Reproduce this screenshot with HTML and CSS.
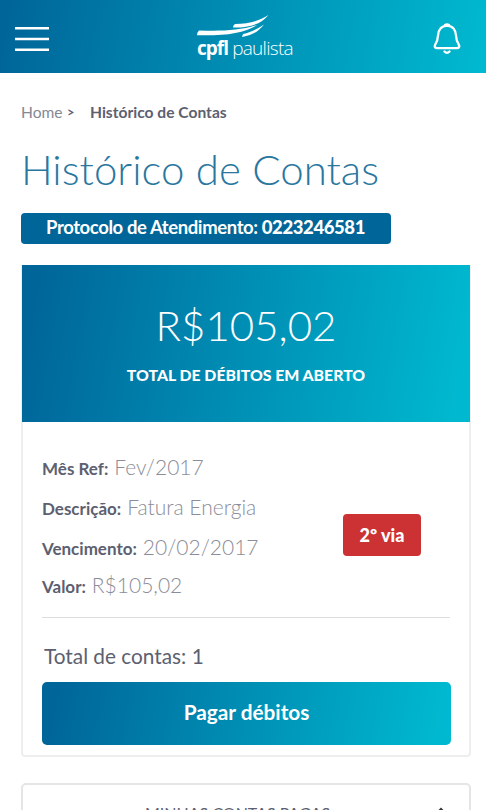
FILE: index.html
```html
<!DOCTYPE html>
<html lang="pt-BR">
<head>
<meta charset="utf-8">
<meta name="viewport" content="width=device-width, initial-scale=1">
<title>Histórico de Contas</title>
<link rel="stylesheet" href="styles.css">
</head>
<body>
<header class="topbar">
  <button class="icon-button" aria-label="Menu">
    <svg width="34" height="26" viewBox="0 0 34 26" fill="none" stroke="#fff" stroke-width="2.6"><path d="M0 2.300H34M0 13H34M0 23.700H34"/></svg>
  </button>
  <div class="logo">
    <svg class="logo-mark" width="72" height="24" viewBox="0 0 72 24" fill="#fff"><path d="M2 15.500C24 16 42 16 60 10C48 18 28 21 0 20.200Q0 17 2 15.500Z"/><path d="M38 9C52 9 62 6 71.500 0C64 9 54 12.500 36 12.500Q36 10 38 9Z"/><path d="M67 9.500C62 16 56 20 45 22L46 19C54 17.500 60 14 67 9.500Z"/></svg>
    <div class="logo-name"><b>cpfl</b> <span>paulista</span></div>
  </div>
  <button class="icon-button" aria-label="Notificações">
    <svg width="28" height="32" viewBox="0 0 28 32" fill="none" stroke="#fff" stroke-width="2.300" stroke-linecap="round" stroke-linejoin="round"><path d="M14 2.500C8 3 5.200 7.500 5 12.500C4.800 17.500 4 19 2.200 21.700C1.200 23.500 2 25.200 4 25.200H24C26 25.200 26.800 23.500 25.800 21.700C24 19 23.200 17.500 23 12.500C22.800 7.500 20 3 14 2.500ZM12 2Q14 .8 16 2M11.500 28.500Q14 31 16.500 28.500"/></svg>
  </button>
</header>
<main class="page">
  <nav class="crumbs"><span class="crumb-home">Home</span><span class="crumb-sep">&gt;</span><b class="crumb-here">Histórico de Contas</b></nav>
  <h1 class="title">Histórico de Contas</h1>
  <div class="protocol"><span>Protocolo de Atendimento: </span><b>0223246581</b></div>
  <section class="card">
    <div class="summary">
      <div class="amount">R$105,02</div>
      <div class="caption">TOTAL DE DÉBITOS EM ABERTO</div>
    </div>
    <div class="details">
      <div class="bill">
        <dl class="fields">
          <div class="field f-month"><dt>Mês Ref:</dt><dd>Fev/2017</dd></div>
          <div class="field f-desc"><dt>Descrição:</dt><dd>Fatura Energia</dd></div>
          <div class="field f-due"><dt>Vencimento:</dt><dd>20/02/2017</dd></div>
          <div class="field f-value"><dt>Valor:</dt><dd>R$105,02</dd></div>
        </dl>
        <button class="copy-button">2º via</button>
      </div>
      <div class="total"><span>Total de contas: 1</span></div>
      <button class="pay-button"><span>Pagar débitos</span></button>
    </div>
  </section>
  <section class="paid">
    <span class="paid-title">MINHAS CONTAS PAGAS</span>
    <svg class="chevron" width="16" height="10" viewBox="0 0 16 10" fill="none" stroke="#333" stroke-width="2"><path d="M1 9L8 2L15 9"/></svg>
  </section>
</main>
</body>
</html>
```
FILE: styles.css
```css
* { box-sizing: border-box; }
html, body { height: 810px; overflow: hidden; }
body { margin: 0; background: #fff; font-family: Lato, "Liberation Sans", sans-serif; color: #5c6070; }
button { border: 0; padding: 0; font-family: inherit; color: #fff; background: none; display: block; }
svg { display: block; }

.topbar { height: 73px; padding: 5px 25px 0 15px; display: flex; align-items: center; justify-content: space-between; background: linear-gradient(100deg, #00669a 2%, #00b8cf 98%); }
.logo { padding: 0 0 3px 10px; width: 108px; }
.logo-mark { margin-left: 0; }
.logo-name { font: 19px/24px "Open Sans", sans-serif; color: #fff; white-space: nowrap; letter-spacing: -.72px; margin-top: -3px; }
.logo-name b { letter-spacing: -1px; }
.logo-name span { font-weight: 300; }

.page { padding: 0 15px 0 21px; }
.crumbs { padding-top: 29px; display: flex; font-size: 15.6px; line-height: 20px; white-space: nowrap; }
.crumb-home { color: #858894; width: 46px; }
.crumb-sep { width: 23px; font-weight: 700; font-size: 13px; }
.title { margin: 19px 0 0; font-size: 42px; line-height: 56px; font-weight: 300; color: #29779f; white-space: nowrap; }
.protocol { margin-top: 16px; width: 370px; height: 31px; padding-left: 25px; border-radius: 4px; background: #006699; color: #fff; font-size: 18.5px; line-height: 29px; font-weight: 700; white-space: nowrap; letter-spacing: -.4px; }
.protocol b { font-weight: 900; }

.card { margin-top: 21px; height: 492px; border: 2px solid #eee; border-top: 0; border-radius: 0 0 4px 4px; }
.summary { height: 157px; margin: 0 -1px; padding-top: 35px; text-align: center; color: #fff; background: linear-gradient(100deg, #00669a 4%, #00b8cf 96%); }
.amount { font-size: 42px; line-height: 50px; font-weight: 300; }
.caption { margin-top: 15px; font-size: 15.8px; line-height: 20px; font-weight: 900; }
.details { padding: 0 19px; }
.bill { height: 196px; border-bottom: 1px solid #ddd; display: flex; justify-content: space-between; padding: 31px 29px 0 0; }
.fields { margin: 0; }
.field { display: flex; align-items: baseline; height: 28px; line-height: 28px; white-space: nowrap; margin-bottom: 12px; }
.field dt { font-size: 17px; font-weight: 700; margin-right: 6px; }
.field dd { margin: 0; font-size: 21px; font-weight: 300; color: #8b8d98; }
.f-due { margin-bottom: 10px; }
.copy-button { margin-top: 61px; width: 78px; height: 42px; border-radius: 4px; background: #cc3233; font-size: 18px; font-weight: 900; }
.total { padding: 23px 0 0 2px; font-size: 20.8px; line-height: 30px; height: 64px; }
.pay-button { width: 409px; height: 63px; padding-bottom: 4px; border-radius: 5px; background: linear-gradient(100deg, #00669a 4%, #00b8cf 96%); font-size: 20.8px; font-weight: 700; }
.paid { margin-top: 26px; height: 70px; border: 2px solid #e5e5e5; border-radius: 5px; display: flex; justify-content: space-between; padding: 16px 20px 0 122px; font-size: 16px; line-height: 24px; white-space: nowrap; }
.chevron { margin-top: 6px; }
```
